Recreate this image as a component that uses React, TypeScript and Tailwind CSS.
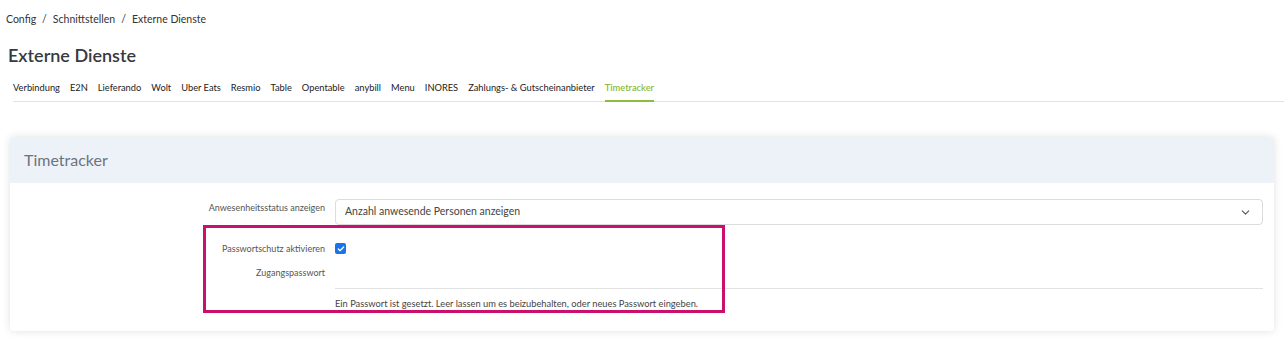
import { ChevronDown, Check } from 'lucide-react';

const tabs = [
  'Verbindung',
  'E2N',
  'Lieferando',
  'Wolt',
  'Uber Eats',
  'Resmio',
  'Table',
  'Opentable',
  'anybill',
  'Menu',
  'INORES',
  'Zahlungs- & Gutscheinanbieter',
  'Timetracker',
];

const crumbs = ['Config', 'Schnittstellen', 'Externe Dienste'];

export default function App() {
  return (
    <div className="w-[1284px] h-[341px] bg-white overflow-hidden font-['Segoe_UI','Lato','Noto_Sans',sans-serif] text-[#333]">
      <div className="pl-[6px] pt-[11px] flex gap-[6px] text-[10.5px] leading-[16px] text-[#333]">
        {crumbs.map((c, i) => (
          <span key={c} className="flex gap-[6px]">
            {i > 0 && <span>/</span>}
            {c}
          </span>
        ))}
      </div>

      <h1 className="pl-[8px] pt-[17px] text-[18px] leading-[22px] font-semibold text-[#343a40]">Externe Dienste</h1>

      <div className="ml-[13px] mt-[15px] flex gap-[10px] border-b border-[#dde3ea] text-[9.3px] leading-[13px]">
        {tabs.map((t) => (
          <div
            key={t}
            className={
              t === 'Timetracker'
                ? 'pb-[6px] border-b-2 border-[#8bbb3f] -mb-px font-semibold text-[#8bbb3f]'
                : 'pb-[7px] text-[#222]'
            }
          >
            {t}
          </div>
        ))}
      </div>

      <section className="relative mx-[10px] mt-[35px] rounded-[4px] bg-white shadow-[0_0_8px_rgba(0,0,0,0.12)]">
        <header className="h-[46px] flex items-center pl-[14px] rounded-t-[4px] bg-[#edf2f9] text-[16px] text-[#6b7280]">
          Timetracker
        </header>

        <div className="pt-[16px] pb-[21px] pr-[11px] text-[9px] text-[#555]">
          <div className="flex">
            <div className="w-[315px] shrink-0 text-right pt-[2px] leading-[13px]">Anwesenheitsstatus anzeigen</div>
            <div className="ml-[10px] flex-1 h-[26px] rounded-[4px] border border-[#dcdcdc] flex items-center justify-between pl-[9px] pr-[10px] text-[10.5px] text-[#444]">
              <span>Anzahl anwesende Personen anzeigen</span>
              <ChevronDown size={13} strokeWidth={2} className="text-[#555]" />
            </div>
          </div>

          <div className="flex items-center mt-[17px]">
            <div className="w-[315px] shrink-0 text-right leading-[13px]">Passwortschutz aktivieren</div>
            <div className="ml-[10px] w-[11px] h-[11px] rounded-[2px] bg-[#1a73e8] flex items-center justify-center">
              <Check size={8} strokeWidth={4} className="text-white" />
            </div>
          </div>

          <div className="flex mt-[9px]">
            <div className="w-[315px] shrink-0 text-right pt-[2px] leading-[13px]">Zugangspasswort</div>
            <div className="ml-[10px] flex-1">
              <div className="h-[25px] border-b border-[#e2e2e2]" />
              <div className="pt-[8px] leading-[13px] text-[9.3px] text-[#444]">
                Ein Passwort ist gesetzt. Leer lassen um es beizubehalten, oder neues Passwort eingeben.
              </div>
            </div>
          </div>
        </div>

        <div className="absolute left-[193px] top-[88px] w-[522px] h-[88px] border-[3px] border-[#c8106c] pointer-events-none" />
      </section>
    </div>
  );
}
